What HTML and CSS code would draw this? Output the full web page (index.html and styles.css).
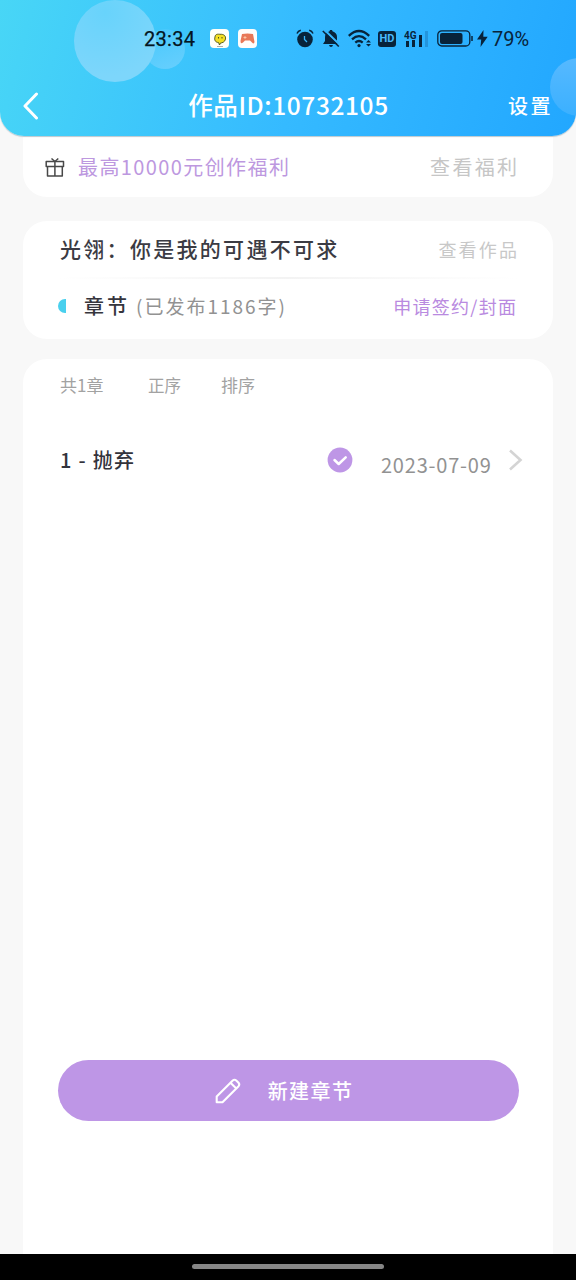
FILE: index.html
```html
<!DOCTYPE html>
<html lang="zh-CN">
<head>
<meta charset="utf-8">
<title>作品</title>
<link rel="stylesheet" href="styles.css">
</head>
<body>
<div class="screen">
  <header class="header">
    <i class="bubble bubble-small"></i>
    <i class="bubble bubble-large"></i>
    <i class="bubble bubble-edge"></i>
    <div class="status">
      <span class="time">23:34</span>
      <svg class="app" width="19" height="19" viewBox="0 0 19 19"><rect width="19" height="19" rx="4" fill="#fffff8"/><path d="M5 8C5 5 8 5 10 5.300C14 5 16 7 15.500 10C15 13 12 14 10.500 14L9.500 16L8.500 13.500C5.500 13.500 4 11 5 8Z" fill="#f3df22" stroke="#4b5018" stroke-width=".9"/><path d="M8.500 8v1.500M12 8v1.500" stroke="#4b5018"/><path d="M7 17.500h6" stroke="#777" stroke-width=".6"/></svg>
      <svg class="pad" width="19" height="19" viewBox="0 0 19 19"><rect width="19" height="19" rx="4" fill="#fffdfb"/><path d="M4 5Q9.500 3.800 15 5L16.500 13Q16 15.500 14 13.500L12 11.500H7L5 13.500Q2.500 15.500 2.500 12Z" fill="#e87858"/><path d="M5.500 8.500h3M7 7v3" stroke="#ffd0b0" stroke-width=".8"/></svg>
      <svg class="alarm" width="18" height="19" viewBox="0 0 18 19"><circle cx="9" cy="10.500" r="7.800" fill="#08233a"/><path d="M1 4.500Q2 2 4.800 1.300M17 4.500Q16 2 13.200 1.300" fill="none" stroke="#08233a" stroke-width="1.500"/><path d="M8.500 7v3.500l2.500 2.500" fill="none" stroke="#36b6fd" stroke-width="1.300"/></svg>
      <svg class="bell" width="18" height="19" viewBox="0 0 18 19"><path d="M8 1h2l.5 1.300Q15 4 15 8v4l2 3H1l2-3V8Q3 4 7.500 2.300ZM7 16h4Q10.500 18 9 18T7 16Z" fill="#08233a"/><path d="M2.300 .8 18 16" stroke="#36b6fd" stroke-width="2"/><path d="M.8 2 16.800 17.500" stroke="#08233a" stroke-width="1.600"/></svg>
      <svg class="wifi" width="24" height="19" viewBox="0 0 24 19"><g fill="none" stroke="#08233a" stroke-width="2.300"><path d="M.8 6.800Q11 -2.800 21.200 6.800"/><path d="M4 10.300Q11 4 18 10.300"/><path d="M7.300 13.600Q11 10.500 14.700 13.600"/></g><circle cx="11" cy="16.600" r="1.600" fill="#08233a"/><path d="M18 13.500 20.500 11 23 13.500ZM18 15 20.500 17.500 23 15Z" fill="#08233a"/></svg>
      <span class="hd">HD</span>
      <svg class="signal" width="26" height="19" viewBox="0 0 26 19"><path d="M2 12h3v6H2ZM8 11h3v7H8ZM15 6h3v12h-3Z" fill="#08233a"/><path d="M21 2h3v16h-3Z" fill="#2495dc"/><text x="0" y="9.500" class="signal-label">4G</text></svg>
      <svg class="battery" width="36" height="17" viewBox="0 0 36 17"><rect x=".8" y=".8" width="32" height="15.200" rx="4" fill="none" stroke="#08233a" stroke-width="1.300"/><rect x="3" y="3" width="22.500" height="11" rx="2" fill="#08233a"/><path d="M35 6v5" stroke="#08233a" stroke-width="1.500"/></svg>
      <svg class="bolt" width="11" height="17" viewBox="0 0 11 17"><path d="M6.500 0 0 9.500h4.200L3.500 17 10.700 6.800H6.300Z" fill="#08233a"/></svg>
      <span class="percent">79%</span>
    </div>
    <nav class="nav">
      <svg class="back" width="16" height="28" viewBox="0 0 16 28"><path d="M13.500 2 2 14 13.500 26" fill="none" stroke="#fff" stroke-width="3" stroke-linecap="round" stroke-linejoin="round"/></svg>
      <h1 class="title">作品ID:10732105</h1>
      <span class="settings">设置</span>
    </nav>
  </header>
  <main class="content">
    <section class="card welfare">
      <svg class="gift" width="20" height="22" viewBox="0 0 20 22"><g fill="none" stroke="#484848" stroke-width="1.500" stroke-linejoin="round"><rect x="1.200" y="5.500" width="17.300" height="5"/><path d="M2.500 10.500V20H17.300V10.500M9.900 5.500V20M6.500 2.500 9.900 5.500 13.300 2.500"/></g></svg>
      <span class="welfare-name">最高10000元创作福利</span>
      <span class="welfare-link">查看福利</span>
    </section>
    <section class="card work">
      <div class="row work-row">
        <span class="work-name">光翎：你是我的可遇不可求</span>
        <span class="work-link">查看作品</span>
      </div>
      <div class="divider"></div>
      <div class="row chapter-row">
        <i class="half-dot"></i>
        <span class="chapter-label">章节</span>
        <span class="chapter-count">(已发布1186字)</span>
        <span class="apply">申请签约/封面</span>
      </div>
    </section>
    <section class="card chapters">
      <div class="filters"><span class="total">共1章</span><span class="order">正序</span><span class="sort">排序</span></div>
      <div class="chapter">
        <span class="chapter-name">1 - 抛弃</span>
        <svg class="check" width="26" height="26" viewBox="0 0 26 26"><circle cx="13" cy="13" r="12.400" fill="#be96e6"/><path d="M7.500 13 11.700 17 18.700 10.300" fill="none" stroke="#fff" stroke-width="2.500" stroke-linecap="round" stroke-linejoin="round"/></svg>
        <span class="date">2023-07-09</span>
        <svg class="arrow" width="15" height="22" viewBox="0 0 15 22"><path d="M2 1.500 12.500 11 2 20.500" fill="none" stroke="#d4d4d4" stroke-width="2.600"/></svg>
      </div>
      <button class="create">
        <svg class="pencil" width="26" height="26" viewBox="0 0 26 26"><g fill="none" stroke="#fff" stroke-width="2.100" stroke-linejoin="round"><path d="M1.700 24.300V18.500L17.500 2.700Q19.500 .8 21.500 2.700L23.300 4.500Q25.200 6.500 23.300 8.500L7.500 24.300Z"/><path d="M15.500 4.700 21.300 10.500"/></g></svg>
        <span>新建章节</span>
      </button>
    </section>
  </main>
  <footer class="gesture"><i class="handle"></i></footer>
</div>
</body>
</html>
```
FILE: styles.css
```css
* { box-sizing: border-box; }
body { margin: 0; background: #f8f8f8; font-family: "Noto Sans CJK SC", sans-serif; }
.screen { width: 576px; height: 1280px; display: flex; flex-direction: column; overflow: hidden; background: #f8f8f8; }
svg { display: block; flex: none; }
span, h1 { white-space: nowrap; line-height: 28px; }

.header { position: relative; z-index: 1; flex: none; height: 136px; overflow: hidden; border-radius: 0 0 24px 24px; background: linear-gradient(105deg, #48d6f6 0%, #35baff 52%, #22a7ff 100%); box-shadow: 0 1px 1px #bcc8cf; }
.bubble { position: absolute; border-radius: 50%; }
.bubble-large { left: 74px; top: 0; width: 82px; height: 82px; background: radial-gradient(circle at 38% 15%, #68d3fb, #7dd6fb 75%); }
.bubble-small { left: 145px; top: 29px; width: 40px; height: 40px; background: linear-gradient(160deg, #45c8fc, #68cffd); }
.bubble-edge { left: 550px; top: 58px; width: 58px; height: 58px; background: linear-gradient(#56b9ff, #3bb0ff); }

.status { position: relative; height: 76px; padding: 1px 0 0 144px; display: flex; align-items: center; color: #08233a; }
.time { width: 66px; font: 400 20px/24px Roboto, sans-serif; color: #041522; letter-spacing: .3px; -webkit-text-stroke: .25px #041522; }
.pad { margin-left: 9px; }
.alarm { margin-left: 39px; }
.bell { margin-left: 8px; }
.wifi { margin-left: 8px; }
.hd { width: 18px; height: 16px; margin-left: 6px; border-radius: 3px; background: #08233a; color: #48bafa; font: 700 11px/16px Roboto, sans-serif; text-align: center; }
.signal { margin-left: 8px; }
.signal-label { font: 700 10px Roboto, sans-serif; fill: #08233a; stroke: #31b2ff; stroke-width: 1px; paint-order: stroke; }
.battery { margin-left: 7px; }
.bolt { margin-left: 4px; }
.percent { margin-left: 4px; font: 400 20px/24px Roboto, sans-serif; }

.nav { position: relative; height: 60px; padding: 0 25px 0 23px; display: grid; grid-template-columns: 43px 1fr 43px; align-items: center; color: #fff; }
.title { margin: 0; padding: 0 0 3px 3px; font-size: 24.5px; font-weight: 500; letter-spacing: .6px; text-align: center; }
.settings { font-size: 20px; font-weight: 500; letter-spacing: 2.5px; }

.content { flex: 1; min-height: 0; padding: 0 23px; display: flex; flex-direction: column; }
.card { flex: none; background: #fff; border-radius: 24px; }
.welfare { height: 61px; padding: 0 36px 0 22px; border-radius: 0 0 24px 24px; display: flex; align-items: center; }
.welfare-name { margin-left: 13px; font-size: 20px; letter-spacing: 1.4px; color: #bd98df; }
.welfare-link { margin: 0 -2.300px 0 auto; font-size: 20px; letter-spacing: 2.3px; color: #c6c6c6; }

.work { height: 118px; margin-top: 24px; padding: 0 36px 0 35px; }
.row { display: flex; align-items: center; }
.work-row { height: 56px; }
.work-name { margin-left: 2px; padding-bottom: 2px; font-size: 21px; font-weight: 500; letter-spacing: 2.3px; color: #3b3b43; }
.work-link { margin: 0 -2.200px 0 auto; font-size: 18px; letter-spacing: 2.2px; color: #c8c8c8; }
.divider { height: 2px; background: linear-gradient(90deg, #fff, #f3f3f3 50%, #fff); }
.chapter-row { height: 54px; }
.half-dot { width: 8px; height: 14px; border-radius: 8px 0 0 8px; background: #49d0ee; }
.chapter-label { margin-left: 18px; font-size: 20px; font-weight: 500; letter-spacing: 3px; color: #35353d; }
.chapter-count { margin-left: 6px; font-size: 19px; letter-spacing: 2px; color: #929292; }
.apply { margin: 0 -.3px 0 auto; padding-bottom: 1px; font-size: 18px; letter-spacing: 1.3px; color: #b98ae0; }

.chapters { flex: 1; min-height: 0; margin-top: 20px; padding: 0 30px 133px 35px; border-radius: 24px 24px 0 0; display: flex; flex-direction: column; }
.filters { height: 53px; padding: 0 0 2px 2px; display: flex; align-items: center; font-size: 17px; color: #a2a2a2; }
.total { width: 88px; }
.order { width: 73px; font-size: 16.5px; }
.chapter { height: 96px; padding-left: 2px; display: flex; align-items: center; }
.chapter-name { width: 269px; font-size: 20px; font-weight: 500; letter-spacing: 1.3px; color: #33333b; }
.check { margin-bottom: 1px; }
.date { width: 128px; margin-left: 28px; padding-top: 9px; font-size: 20px; letter-spacing: .8px; color: #929292; }
.create { width: 461px; height: 61px; margin-top: auto; padding: 0 9px 0 0; border: 0; border-radius: 31px; display: flex; align-items: center; justify-content: center; gap: 27px; background: #be96e6; color: #fff; font: 500 20px "Noto Sans CJK SC", sans-serif; letter-spacing: 1.4px; }

.gesture { flex: none; height: 26px; padding-top: 10px; background: #000; }
.handle { display: block; width: 192px; height: 5px; margin: 0 auto; border-radius: 3px; background: #858585; }
```
